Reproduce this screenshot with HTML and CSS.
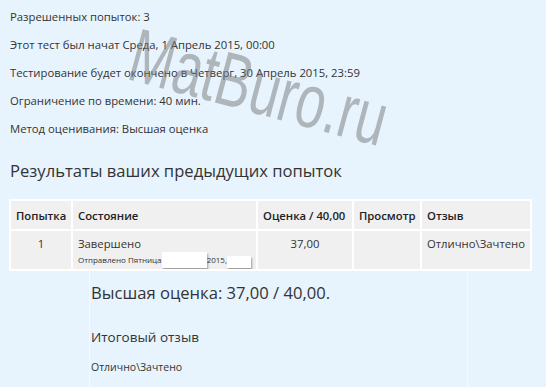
FILE: index.html
```html
<!DOCTYPE html>
<html lang="ru">
<head>
<meta charset="utf-8">
<title>Результаты</title>
<link rel="stylesheet" href="styles.css">
</head>
<body>
<div class="page">
  <div class="info">
    <p>Разрешенных попыток: 3</p>
    <p>Этот тест был начат Среда, 1 Апрель 2015, 00:00</p>
    <p>Тестирование будет окончено в Четверг, 30 Апрель 2015, 23:59</p>
    <p>Ограничение по времени: 40 мин.</p>
    <p>Метод оценивания: Высшая оценка</p>
  </div>
  <h3 class="title">Результаты ваших предыдущих попыток</h3>
  <table class="attempts">
    <colgroup>
      <col class="w1">
      <col class="w2">
      <col class="w3">
      <col class="w4">
      <col class="w5">
    </colgroup>
    <thead>
      <tr>
        <th>Попытка</th>
        <th>Состояние</th>
        <th>Оценка / 40,00</th>
        <th>Просмотр</th>
        <th>Отзыв</th>
      </tr>
    </thead>
    <tbody>
      <tr>
        <td class="center">1</td>
        <td>
          <div class="state">Завершено</div>
          <div class="sub">Отправлено Пятница<span class="redact r1"></span>2015,<span class="redact r2"></span></div>
        </td>
        <td class="center">37,00</td>
        <td></td>
        <td>Отлично\Зачтено</td>
      </tr>
    </tbody>
  </table>
  <div class="summary">
    <h3 class="best">Высшая оценка: 37,00 / 40,00.</h3>
    <h4 class="fb-title">Итоговый отзыв</h4>
    <p class="fb">Отлично\Зачтено</p>
  </div>
</div>
<div class="watermark">MatBuro.ru</div>
</body>
</html>
```
FILE: styles.css
```css
html, body {
  margin: 0;
  padding: 0;
  background: #e8f4fd;
}
body {
  font-family: "Open Sans", "Noto Sans", sans-serif;
  color: #333;
  font-size: 11.3px;
  height: 387px;
  overflow: hidden;
  position: relative;
}
.page {
  padding: 3px 0 0 10px;
}
.info p {
  margin: 0;
  line-height: 28px;
}
.title {
  margin: 16px 0 16px;
  font-size: 16.6px;
  font-weight: normal;
  line-height: 24px;
  color: #333;
}
.attempts {
  border-collapse: collapse;
  table-layout: fixed;
  width: 521px;
  margin-left: -1px;
}
.w1 { width: 62px; }
.w2 { width: 185px; }
.w3 { width: 96px; }
.w4 { width: 68px; }
.w5 { width: 110px; }
.attempts th,
.attempts td {
  background: #f0f0f0;
  border: 2px solid #fff;
  text-align: left;
  vertical-align: top;
  padding: 0 5px;
  white-space: nowrap;
  overflow: hidden;
}
.attempts th {
  height: 30px;
  box-sizing: border-box;
  vertical-align: middle;
  font-weight: 600;
  color: #222;
}
.attempts td {
  height: 40px;
  padding-top: 5px;
  box-sizing: border-box;
}
.attempts .center {
  text-align: center;
}
.state {
  line-height: 16px;
}
.sub {
  font-size: 8px;
  line-height: 14px;
  display: flex;
  align-items: center;
}
.redact {
  display: inline-block;
  background: #fff;
  box-shadow: 1px 2px 2px rgba(0, 0, 0, 0.35);
}
.r1 { width: 47px; height: 16px; }
.r2 { width: 25px; height: 12px; margin-top: 4px; }
.summary {
  margin-left: 79px;
  width: 376px;
  border-left: 1px solid #f3f9fe;
  border-right: 1px solid #f3f9fe;
  padding: 10px 0 20px 1px;
}
.best {
  margin: 0;
  font-size: 16.6px;
  font-weight: normal;
  line-height: 24px;
}
.fb-title {
  margin: 22px 0 0;
  font-size: 13.5px;
  font-weight: normal;
  line-height: 20px;
}
.fb {
  margin: 12px 0 0;
  font-size: 10.5px;
  line-height: 16px;
}
.watermark {
  position: absolute;
  left: 122px;
  top: 14px;
  font-family: "Liberation Sans", Arial, sans-serif;
  font-size: 76px;
  line-height: 1;
  color: rgba(120, 124, 128, 0.52);
  transform-origin: 0 100%;
  transform: rotate(15deg) scaleX(0.7);
  white-space: nowrap;
  pointer-events: none;
}
```
